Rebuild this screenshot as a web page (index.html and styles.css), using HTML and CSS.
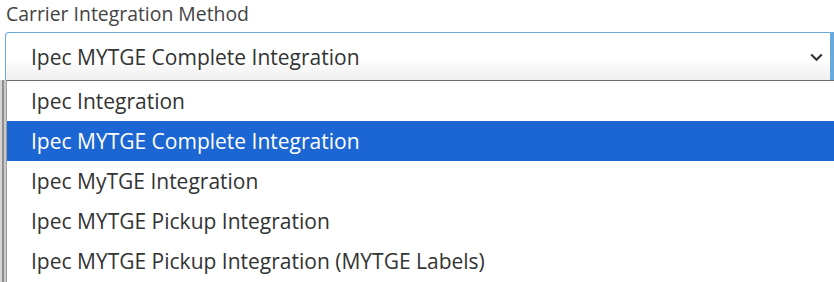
FILE: index.html
```html
<!DOCTYPE html>
<html lang="en">
<head>
    <meta charset="UTF-8">
    <meta name="viewport" content="width=device-width, initial-scale=1.0">
    <title>Carrier Integration Method</title>
    <link rel="stylesheet" href="styles.css">
</head>
<body>
    <div class="field">
        <label class="field-label">Carrier Integration Method</label>
        <div class="select-box">
            <span class="select-value">Ipec MYTGE Complete Integration</span>
            <svg class="chevron" width="13" height="9" viewBox="0 0 13 9">
                <path d="M1.2 1.5 L6.5 6.8 L11.8 1.5" fill="none" stroke="#333" stroke-width="2.2"/>
            </svg>
        </div>
    </div>

    <div class="dropdown-row">
        <div class="edge"></div>
        <ul class="options">
            <li>Ipec Integration</li>
            <li class="selected">Ipec MYTGE Complete Integration</li>
            <li>Ipec MyTGE Integration</li>
            <li>Ipec MYTGE Pickup Integration</li>
            <li>Ipec MYTGE Pickup Integration (MYTGE Labels)</li>
        </ul>
    </div>
</body>
</html>
```

FILE: styles.css
```css
body {
    margin: 0;
    padding: 0;
    background: #fff;
    font-family: 'Open Sans', 'Noto Sans', sans-serif;
    color: #333;
    overflow: hidden;
}

.field {
    padding-left: 5px;
}

.field-label {
    display: block;
    height: 32px;
    padding-left: 1px;
    font-size: 19.4px;
    line-height: 28px;
    color: #444;
}

.select-box {
    display: flex;
    align-items: center;
    justify-content: space-between;
    height: 47px;
    padding: 0 7px 0 25px;
    border: 1px solid #6aa9dc;
    border-right: 4px solid #6aa9dc;
    border-bottom: none;
    border-radius: 4px 0 0 0;
    background: linear-gradient(to bottom, #fff 55%, #eeeeee);
    font-size: 21px;
    color: #333;
}

.chevron {
    margin-top: 1px;
}

/* the opened list of options */
.dropdown-row {
    display: flex;
}

.edge {
    width: 6px;
    background: linear-gradient(to right, #d6d6d6 0, #d6d6d6 2px, #8e8e8e 2px, #8e8e8e 4px, #c9c9c9 4px);
}

.options {
    flex: 1;
    list-style: none;
    margin: 0;
    padding: 0 0 1px;
    border-top: 1px solid #6b6b6b;
    border-left: 1px solid #a0a0a0;
    border-bottom: 1px solid #e6e6e6;
    background: #fff;
}

.options li {
    height: 40px;
    line-height: 40px;
    padding-left: 24px;
    font-size: 21px;
    color: #333;
}

.options li.selected {
    background: #1b66d2;
    color: #fff;
}
```
